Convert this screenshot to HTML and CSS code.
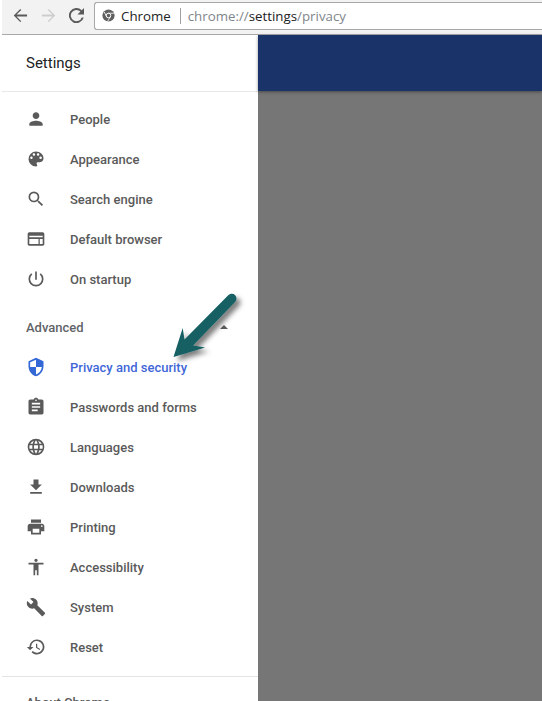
FILE: index.html
```html
<!DOCTYPE html>
<html lang="en">
<head>
<meta charset="utf-8">
<title>Settings - Privacy and security</title>
<link rel="stylesheet" href="styles.css">
</head>
<body>
<div class="page">
  <header class="toolbar">
    <svg class="tb-icon" viewBox="0 0 16 16"><path class="ic-dark" d="M15 7H3.8l5-5L7.7 1 .8 8l6.900 7 1.100-1-5-5H15z"/></svg>
    <svg class="tb-icon" viewBox="0 0 16 16"><path class="ic-light" d="M1 7h11.200l-5-5 1.100-1 6.900 7-6.900 7-1.100-1 5-5H1z"/></svg>
    <svg class="tb-icon reload" viewBox="0 0 16 16"><path class="ic-dark" d="M13.600 2.400A8 8 0 1 0 15.700 10h-2.100a6 6 0 1 1-1.400-6.200L9 7h7V0z"/></svg>
    <div class="omnibox">
      <svg class="favicon" viewBox="0 0 16 16"><circle class="fav-bg" cx="8" cy="8" r="7.500"/><circle class="fav-ring" cx="8" cy="8" r="2.800"/><path class="fav-line" d="M8 5.200h7M5.600 9.400 2.700 3.500M10.400 9.400l-3.600 6"/></svg>
      <span class="origin">Chrome</span>
      <span class="sep"></span>
      <span class="url">chrome://<b>settings</b>/privacy</span>
    </div>
  </header>
  <div class="content">
    <aside class="sidebar">
      <div class="side-title">Settings</div>
      <nav class="nav">
        <a class="item"><svg class="icon" viewBox="0 0 24 24"><path d="M12 12c2.200 0 4-1.800 4-4s-1.800-4-4-4-4 1.800-4 4 1.800 4 4 4zm0 2c-2.700 0-8 1.300-8 4v2h16v-2c0-2.700-5.300-4-8-4z"/></svg>People</a>
        <a class="item"><svg class="icon" viewBox="0 0 24 24"><path d="M12 3a9 9 0 0 0 0 18c.8 0 1.500-.7 1.500-1.500 0-.4-.1-.7-.4-1-.2-.3-.4-.6-.4-1 0-.8.700-1.500 1.500-1.500H16c2.800 0 5-2.200 5-5 0-4.400-4-8-9-8zm-5.500 9a1.500 1.500 0 1 1 0-3 1.500 1.500 0 0 1 0 3zm3-4a1.500 1.500 0 1 1 0-3 1.500 1.500 0 0 1 0 3zm5 0a1.500 1.500 0 1 1 0-3 1.500 1.500 0 0 1 0 3zm3 4a1.500 1.500 0 1 1 0-3 1.500 1.500 0 0 1 0 3z"/></svg>Appearance</a>
        <a class="item"><svg class="icon" viewBox="0 0 24 24"><path d="M15.500 14h-.79l-.28-.27A6.470 6.470 0 0 0 16 9.500 6.500 6.500 0 1 0 9.500 16c1.610 0 3.090-.59 4.230-1.570l.27.28v.79l5 4.990L20.490 19l-4.990-5zm-6 0C7.010 14 5 11.990 5 9.500S7.010 5 9.500 5 14 7.010 14 9.500 11.990 14 9.500 14z"/></svg>Search engine</a>
        <a class="item"><svg class="icon" viewBox="0 0 24 24"><path d="M20 4H4c-1.100 0-2 .9-2 2v12c0 1.100.9 2 2 2h16c1.100 0 2-.9 2-2V6c0-1.100-.9-2-2-2zm-5 14H4v-6h11v6zm5 0h-3.500v-6H20v6zm0-8H4V8h16v2z" fill-rule="evenodd"/></svg>Default browser</a>
        <a class="item"><svg class="icon" viewBox="0 0 24 24"><path d="M13 3h-2v10h2V3zm4.800 2.200-1.400 1.400A7 7 0 1 1 7.600 6.600L6.200 5.200a9 9 0 1 0 11.600 0z"/></svg>On startup</a>
        <div class="advanced">Advanced<span class="caret"></span></div>
        <a class="item active"><svg class="icon" viewBox="0 0 24 24"><path d="M12 1 3 5v6c0 5.500 3.800 10.700 9 12 5.200-1.300 9-6.500 9-12V5l-9-4zm0 11h7c-.5 4.100-3.300 7.800-7 8.900V12H5V6.300l7-3.100V12z"/></svg>Privacy and security</a>
        <a class="item"><svg class="icon" viewBox="0 0 24 24"><path d="M19 3h-4.200C14.400 1.800 13.300 1 12 1s-2.400.8-2.800 2H5c-1.100 0-2 .9-2 2v14c0 1.100.9 2 2 2h14c1.100 0 2-.9 2-2V5c0-1.100-.9-2-2-2zm-7 0c.6 0 1 .4 1 1s-.4 1-1 1-1-.4-1-1 .4-1 1-1zm2 14H7v-2h7v2zm3-4H7v-2h10v2zm0-4H7V7h10v2z"/></svg>Passwords and forms</a>
        <a class="item"><svg class="icon" viewBox="0 0 24 24"><path d="M12 2a10 10 0 1 0 0 20 10 10 0 0 0 0-20zm6.900 6H16c-.3-1.300-.8-2.400-1.400-3.600A8 8 0 0 1 18.900 8zM12 4c.8 1.200 1.500 2.500 1.900 4h-3.800c.4-1.500 1.100-2.800 1.900-4zM4.300 14a8.300 8.300 0 0 1 0-4h3.400a16.500 16.500 0 0 0 0 4H4.300zm.8 2H8c.3 1.300.8 2.400 1.400 3.600A8 8 0 0 1 5.100 16zM8 8H5.100a8 8 0 0 1 4.300-3.600C8.800 5.600 8.300 6.700 8 8zm4 12c-.8-1.200-1.500-2.500-1.900-4h3.800c-.4 1.500-1.100 2.800-1.900 4zm2.300-6H9.700a14.700 14.700 0 0 1 0-4h4.700a14.700 14.700 0 0 1-.1 4zm.3 5.600c.6-1.200 1.100-2.300 1.400-3.600h2.900a8 8 0 0 1-4.300 3.600zm1.800-5.600a16.500 16.500 0 0 0 0-4h3.400a8.300 8.300 0 0 1 0 4h-3.400z"/></svg>Languages</a>
        <a class="item"><svg class="icon" viewBox="0 0 24 24"><path d="M19 9h-4V3H9v6H5l7 7 7-7zM5 18v2h14v-2H5z"/></svg>Downloads</a>
        <a class="item"><svg class="icon" viewBox="0 0 24 24"><path d="M19 8H5c-1.700 0-3 1.300-3 3v6h4v4h12v-4h4v-6c0-1.700-1.300-3-3-3zm-3 11H8v-5h8v5zm3-7c-.6 0-1-.4-1-1s.4-1 1-1 1 .4 1 1-.4 1-1 1zm-1-9H6v4h12V3z"/></svg>Printing</a>
        <a class="item"><svg class="icon" viewBox="0 0 24 24"><path d="M12 2a2 2 0 1 1 0 4 2 2 0 0 1 0-4zm9 7h-6v13h-2v-6h-2v6H9V9H3V7h18v2z"/></svg>Accessibility</a>
        <a class="item"><svg class="icon" viewBox="0 0 24 24"><path d="M22.700 19l-9.100-9.100c.9-2.300.4-5-1.500-6.900-2-2-5-2.400-7.400-1.300L9 6 6 9 1.600 4.700C.4 7.100.9 10.100 2.900 12.100c1.900 1.900 4.600 2.400 6.900 1.500l9.100 9.100c.4.400 1 .4 1.400 0l2.300-2.300c.5-.4.500-1.100.1-1.400z"/></svg>System</a>
        <a class="item"><svg class="icon" viewBox="0 0 24 24"><path d="M13 3a9 9 0 0 0-9 9H1l3.900 3.900L9 12H6a7 7 0 1 1 2.100 4.900l-1.400 1.400A9 9 0 1 0 13 3zm-1 5v5l4.300 2.500.7-1.200-3.500-2.100V8H12z"/></svg>Reset</a>
      </nav>
      <div class="about">About Chrome</div>
    </aside>
    <main class="main">
      <div class="bluebar"></div>
    </main>
  </div>
  <svg class="arrow" viewBox="0 0 90 85">
    <defs>
      <filter id="arrow-shadow" x="-30%" y="-30%" width="170%" height="170%"><feDropShadow dx="4" dy="4" stdDeviation="2.500" flood-color="#000" flood-opacity=".5"/></filter>
    </defs>
    <path class="arrow-shape" d="M68 10.500c2-2 5-2.500 7-.5s2 5 0 7L33 60.500l12 2-31.500 9.500 9.200-29 1.800 11.500z"/>
  </svg>
</div>
</body>
</html>
```
FILE: styles.css
```css
* { box-sizing: border-box; }
html, body { margin: 0; padding: 0; height: 100%; overflow: hidden; background: #fff; }
.page { position: relative; width: 542px; height: 701px; overflow: hidden; display: flex; flex-direction: column; font-family: Roboto, "Liberation Sans", sans-serif; }
.toolbar { height: 35px; margin-left: 2px; flex: none; display: flex; align-items: center; background: #f2f2f2; border-bottom: 1px solid #a9a9a9; padding: 0 0 3px 11px; }
.tb-icon { width: 15px; height: 15px; margin-right: 13px; flex: none; }
.reload { margin-right: 10px; }
.ic-dark { fill: #5a5a5a; }
.ic-light { fill: #cdcdcd; }
.omnibox { flex: 1; height: 28px; display: flex; align-items: center; background: #fff; border: 1px solid #a8a8a8; border-right: 0; border-radius: 3px 0 0 3px; padding-left: 7px; font-family: "Open Sans", "Noto Sans", sans-serif; font-size: 13.3px; }
.favicon { width: 13px; height: 13px; flex: none; margin-right: 6px; }
.fav-bg { fill: #5f5f5f; }
.fav-ring { fill: #5f5f5f; stroke: #fff; stroke-width: 1.200; }
.fav-line { stroke: #fff; stroke-width: 1; fill: none; }
.origin { color: #222; }
.sep { width: 1px; height: 16px; background: #a0a0a0; margin: 0 7px 0 9px; }
.url { color: #80868b; }
.url b { font-weight: 400; color: #222; }
.content { flex: 1; min-height: 0; display: flex; }
.sidebar { width: 258px; flex: none; overflow: hidden; background: #fff; }
.side-title { height: 57px; margin-left: 2px; padding-left: 24px; display: flex; align-items: center; font-size: 15px; color: #202124; border-bottom: 1px solid #e8e8e8; }
.nav { padding: 7px 0 9px; border-bottom: 1px solid #e4e4e4; margin-left: 2px; }
.item { height: 40px; display: flex; align-items: center; padding-left: 24px; font-size: 13px; font-weight: 500; color: #5a5a5a; }
.icon { width: 20px; height: 20px; margin-right: 24px; flex: none; fill: #5a5a5a; }
.active { color: #3f67d8; }
.active .icon { fill: #3367d6; }
.advanced { height: 40px; margin-top: 8px; display: flex; align-items: center; justify-content: space-between; padding: 0 30px 0 24px; font-size: 13px; font-weight: 500; color: #5f6368; }
.caret { width: 0; height: 0; border-left: 4px solid transparent; border-right: 4px solid transparent; border-bottom: 4px solid #5a5a5a; }
.about { margin-left: 2px; padding: 18px 0 0 24px; font-size: 13px; font-weight: 500; color: #5a5a5a; }
.main { flex: 1; background: #767676; }
.bluebar { height: 56px; background: #1a3369; box-shadow: 0 1px 3px rgba(0,0,0,.4); }
.arrow { position: absolute; left: 160px; top: 285px; width: 90px; height: 85px; overflow: visible; }
.arrow-shape { fill: #125e63; filter: url(#arrow-shadow); }
```
